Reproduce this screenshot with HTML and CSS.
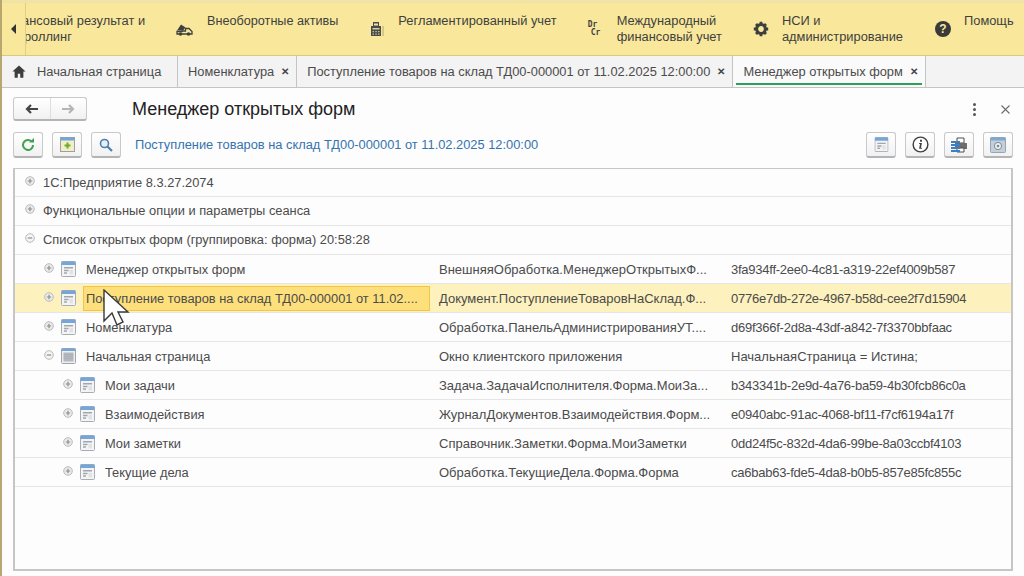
FILE: index.html
```html
<!DOCTYPE HTML>
<html>
	<head>
		<meta http-equiv="Content-Type" content="text/html; charset=UTF-8" />
		<title>Менеджер открытых форм</title>
		<link rel="stylesheet" href="styles.css">
	</head>
	<body>
		<svg class="defs" width="0" height="0">
			<symbol id="form" viewBox="0 0 15 16">
				<rect x="0.5" y="0.5" width="14" height="15" rx="1" fill="#f3f4f5" stroke="#a9adb2"/>
				<rect x="0.5" y="0.5" width="14" height="3.5" fill="#76a5d8"/>
				<path d="M3 6h9v1.5H3zM3 8.8h4.5v1.5H3zM3 11.3h3v1.5H3z" fill="#a3a6aa"/>
				<path d="M8.5 8.8H12v4.5H8.5z" fill="#e0e2e4"/>
			</symbol>
			<symbol id="window" viewBox="0 0 15 16">
				<rect x="0.5" y="0.5" width="14" height="15" rx="1" fill="#eceef0" stroke="#a2a6ab"/>
				<rect x="0.5" y="0.5" width="14" height="2.5" fill="#76a5d8"/>
				<rect x="2.5" y="4.5" width="10" height="9" fill="#b4b9bf"/>
				<path d="M2.5 6.5h10M2.5 8.5h10M2.5 10.5h10" stroke="#a5aab0" stroke-width="0.6"/>
			</symbol>
			<symbol id="plus" viewBox="0 0 10 10">
				<circle cx="5" cy="5" r="4.3" fill="#ececec" stroke="#b9b9b9"/>
				<path d="M2.8 5h4.4M5 2.8v4.4" stroke="#8c8c8c" stroke-width="1.2"/>
			</symbol>
			<symbol id="minus" viewBox="0 0 10 10">
				<circle cx="5" cy="5" r="4.3" fill="#f4f4f4" stroke="#b9b9b9"/>
				<path d="M2.8 5h4.4" stroke="#8c8c8c" stroke-width="1.2"/>
			</symbol>
		</svg>

		<div class="sections">
			<div class="sections_prev"><span class="tri"></span></div>
			<div class="sections_strip">
				<div class="section section--first">
					<span class="section_text">Финансовый результат и<br>контроллинг</span>
				</div>
				<div class="section">
					<svg class="section_icon section_icon--wide" viewBox="0 0 17 14"><path d="M1 8.5L5 2.5l4.5 3L7 8.5z" fill="#3f3f3f"/><path d="M6 9h3.5V6.5H13l3 3V12H1V9.5h5z" fill="none" stroke="#3f3f3f" stroke-width="1.3"/><circle cx="4.5" cy="12" r="1.8" fill="#3f3f3f"/><circle cx="12.5" cy="12" r="1.8" fill="#3f3f3f"/></svg>
					<span class="section_text section_text--narrow">Внеоборотные активы</span>
				</div>
				<div class="section section--calc">
					<svg class="section_icon" viewBox="0 0 16 16"><path d="M2 5h10v10H2z" fill="#4a4a4a"/><path d="M4 1h6v5H4z" fill="#4a4a4a"/><path d="M5 2.5h4v2H5z" fill="#efe3ae"/><path d="M3.5 7h7v1.5h-7z" fill="#d8cfa0"/><path d="M3.5 10h1.5v1.3H3.5zM6.3 10h1.5v1.3H6.3zM9 10h1.5v1.3H9zM3.5 12.5h1.5v1.3H3.5zM6.3 12.5h1.5v1.3H6.3zM9 12.5h1.5v1.3H9z" fill="#c9c09a"/><path d="M13.5 5h1v10h-1z" fill="#b3a772"/></svg>
					<span class="section_text">Регламентированный учет</span>
				</div>
				<div class="section">
					<span class="section_icon drcr"><span>Dr</span><span class="drcr_cr">Cr</span></span>
					<span class="section_text">Международный<br>финансовый учет</span>
				</div>
				<div class="section">
					<svg class="section_icon" viewBox="0 0 16 16"><circle cx="8" cy="8" r="4.4" fill="none" stroke="#3f3f3f" stroke-width="3"/><path d="M6.6 0.8h2.8v2.6H6.6zM6.6 12.6h2.8v2.6H6.6zM0.8 6.6h2.6v2.8H0.8zM12.6 6.6h2.6v2.8h-2.6zM2 4l2-2 2 2-2 2zM10 4l2-2 2 2-2 2zM2 12l2-2 2 2-2 2zM10 12l2-2 2 2-2 2z" fill="#3f3f3f"/></svg>
					<span class="section_text">НСИ и<br>администрирование</span>
				</div>
				<div class="section section--help">
					<span class="section_icon help">?</span>
					<span class="section_text">Помощь</span>
				</div>
			</div>
		</div>

		<div class="tabs">
			<div class="tab tab--home">
				<svg class="home_icon" viewBox="0 0 16 14"><path d="M8 0L0.5 7H3v7h3.6V9.5h2.8V14H13V7h2.5z" fill="#3d3d3d"/></svg>
				<span>Начальная страница</span>
			</div>
			<div class="tab">
				<span>Номенклатура</span>
				<span class="tab_close">✕</span>
			</div>
			<div class="tab">
				<span>Поступление товаров на склад ТД00-000001 от 11.02.2025 12:00:00</span>
				<span class="tab_close">✕</span>
			</div>
			<div class="tab tab--active">
				<span>Менеджер открытых форм</span>
				<span class="tab_close">✕</span>
			</div>
		</div>

		<div class="form">
			<div class="form_head">
				<div class="nav">
					<div class="nav_btn">
						<svg width="14" height="10" viewBox="0 0 14 10"><path d="M13 5H3M6 1L2 5l4 4" fill="none" stroke="#444" stroke-width="2.2"/></svg>
					</div>
					<div class="nav_btn">
						<svg width="14" height="10" viewBox="0 0 14 10"><path d="M1 5h10M8 1l4 4-4 4" fill="none" stroke="#b5b5b5" stroke-width="2.2"/></svg>
					</div>
				</div>
				<h1 class="form_title">Менеджер открытых форм</h1>
				<div class="form_more"><i></i><i></i><i></i></div>
				<svg class="form_close" width="9" height="9" viewBox="0 0 9 9"><path d="M0.5 0.5l8 8M8.5 0.5l-8 8" stroke="#6d6d6d" stroke-width="1.1"/></svg>
			</div>

			<div class="toolbar">
				<div class="btn">
					<svg width="14" height="14" viewBox="0 0 14 14"><path d="M12 7a5 5 0 1 1-1.6-3.7" fill="none" stroke="#3fa34d" stroke-width="2"/><path d="M8 4.5h5V0z" fill="#3fa34d"/></svg>
				</div>
				<div class="btn">
					<svg width="15" height="15" viewBox="0 0 15 15"><rect x="0.5" y="0.5" width="14" height="14" fill="#f3eec6" stroke="#9aa0a6"/><rect x="0.5" y="0.5" width="14" height="3" fill="#76a5d8"/><path d="M7.5 5.5v6M4.5 8.5h6" stroke="#6cab32" stroke-width="2"/></svg>
				</div>
				<div class="btn">
					<svg width="14" height="14" viewBox="0 0 14 14"><circle cx="5.5" cy="5.5" r="4" fill="#e6eff8" stroke="#4c7fae" stroke-width="1.6"/><path d="M8.5 8.5l4.5 4.5" stroke="#4c7fae" stroke-width="2.2"/></svg>
				</div>
				<span class="toolbar_link">Поступление товаров на склад ТД00-000001 от 11.02.2025 12:00:00</span>
				<div class="toolbar_right">
					<div class="btn">
						<svg width="15" height="15" viewBox="0 0 15 16"><use href="#form"/></svg>
					</div>
					<div class="btn">
						<svg width="17" height="17" viewBox="0 0 18 18"><circle cx="9" cy="9" r="7.8" fill="#fff" stroke="#3f3f3f" stroke-width="1.5"/><path d="M8.5 4h2v2h-2zM7.5 7.5h3l-1 5h1v1h-3l1-5h-1z" fill="#3f3f3f"/></svg>
					</div>
					<div class="btn">
						<svg width="18" height="16" viewBox="0 0 18 16"><path d="M7 1h7v5H7z" fill="#fff" stroke="#4d4d4d"/><path d="M5 6h12v6H5z" fill="#6d6d6d"/><path d="M7 11h7v4H7z" fill="#fff" stroke="#4d4d4d"/><path d="M1 4h9v2H1zM1 7h9v2H1zM1 10h9v2H1zM1 13h9v2H1z" fill="#3f7fc0"/></svg>
					</div>
					<div class="btn">
						<svg width="16" height="16" viewBox="0 0 16 16"><rect x="0.5" y="0.5" width="15" height="15" rx="1" fill="#c3cfdb" stroke="#9aa4ae"/><rect x="0.5" y="0.5" width="15" height="3" fill="#7fa8d0"/><circle cx="8" cy="9" r="3.6" fill="#eef1f4" stroke="#7c8791"/><circle cx="8" cy="9" r="1.3" fill="#7c8791"/></svg>
					</div>
				</div>
			</div>

			<div class="tree">
				<div class="row row--first lvl0">
					<div class="cell"><svg class="exp"><use href="#plus"/></svg><span>1С:Предприятие 8.3.27.2074</span></div>
				</div>
				<div class="row lvl0">
					<div class="cell"><svg class="exp"><use href="#plus"/></svg><span>Функциональные опции и параметры сеанса</span></div>
				</div>
				<div class="row lvl0">
					<div class="cell"><svg class="exp"><use href="#minus"/></svg><span>Список открытых форм (группировка: форма) 20:58:28</span></div>
				</div>
				<div class="row lvl1">
					<div class="cell"><svg class="exp"><use href="#plus"/></svg><svg class="ico"><use href="#form"/></svg><span class="name">Менеджер открытых форм</span></div>
					<div class="cell2">ВнешняяОбработка.МенеджерОткрытыхФ...</div>
					<div class="cell3 uuid">3fa934ff-2ee0-4c81-a319-22ef4009b587</div>
				</div>
				<div class="row lvl1 row--current">
					<div class="cell"><svg class="exp"><use href="#plus"/></svg><svg class="ico"><use href="#form"/></svg><span class="name name--selected">Поступление товаров на склад ТД00-000001 от 11.02....</span></div>
					<div class="cell2">Документ.ПоступлениеТоваровНаСклад.Ф...</div>
					<div class="cell3 uuid">0776e7db-272e-4967-b58d-cee2f7d15904</div>
				</div>
				<div class="row lvl1">
					<div class="cell"><svg class="exp"><use href="#plus"/></svg><svg class="ico"><use href="#form"/></svg><span class="name">Номенклатура</span></div>
					<div class="cell2">Обработка.ПанельАдминистрированияУТ....</div>
					<div class="cell3 uuid">d69f366f-2d8a-43df-a842-7f3370bbfaac</div>
				</div>
				<div class="row lvl1">
					<div class="cell"><svg class="exp"><use href="#minus"/></svg><svg class="ico"><use href="#window"/></svg><span class="name">Начальная страница</span></div>
					<div class="cell2">Окно клиентского приложения</div>
					<div class="cell3">НачальнаяСтраница = Истина;</div>
				</div>
				<div class="row lvl2">
					<div class="cell"><svg class="exp"><use href="#plus"/></svg><svg class="ico"><use href="#form"/></svg><span class="name">Мои задачи</span></div>
					<div class="cell2">Задача.ЗадачаИсполнителя.Форма.МоиЗа...</div>
					<div class="cell3 uuid">b343341b-2e9d-4a76-ba59-4b30fcb86c0a</div>
				</div>
				<div class="row lvl2">
					<div class="cell"><svg class="exp"><use href="#plus"/></svg><svg class="ico"><use href="#form"/></svg><span class="name">Взаимодействия</span></div>
					<div class="cell2">ЖурналДокументов.Взаимодействия.Форм...</div>
					<div class="cell3 uuid">e0940abc-91ac-4068-bf11-f7cf6194a17f</div>
				</div>
				<div class="row lvl2">
					<div class="cell"><svg class="exp"><use href="#plus"/></svg><svg class="ico"><use href="#form"/></svg><span class="name">Мои заметки</span></div>
					<div class="cell2">Справочник.Заметки.Форма.МоиЗаметки</div>
					<div class="cell3 uuid">0dd24f5c-832d-4da6-99be-8a03ccbf4103</div>
				</div>
				<div class="row lvl2">
					<div class="cell"><svg class="exp"><use href="#plus"/></svg><svg class="ico"><use href="#form"/></svg><span class="name">Текущие дела</span></div>
					<div class="cell2">Обработка.ТекущиеДела.Форма.Форма</div>
					<div class="cell3 uuid">ca6bab63-fde5-4da8-b0b5-857e85fc855c</div>
				</div>
			</div>
		</div>

		<svg class="cursor" width="28" height="38" viewBox="0 0 28 38"><path d="M2 1v31l8-8 5 12 6-3-5-10h10z" fill="#fff" stroke="#3a3a3a" stroke-width="1.4"/></svg>
	</body>
</html>
```

FILE: styles.css
```css
* {
	box-sizing: border-box;
}
html, body {
	height: 100%;
}
body {
	margin: 0;
	overflow: hidden;
	display: flex;
	flex-direction: column;
	position: relative;
	background: #fdfdfe;
	border-left: 2px solid #b7a76f;
	font-family: "Liberation Sans", Arial, sans-serif;
	font-size: 12.85px;
	color: #4b4b4b;
}
.defs {
	position: absolute;
}

/* section panel */
.sections {
	height: 56px;
	flex: none;
	display: flex;
	background: #f9e89b;
	border-top: 3px solid #efe3a6;
	border-bottom: 1px solid #d9c97e;
}
.sections_prev {
	width: 24px;
	flex: none;
	display: flex;
	align-items: center;
	justify-content: center;
	border-right: 1px solid #e0cf80;
}
.tri {
	border-right: 5px solid #333;
	border-top: 5px solid transparent;
	border-bottom: 5px solid transparent;
}
.sections_strip {
	flex: 1;
	display: flex;
	gap: 31px;
	overflow: hidden;
	white-space: nowrap;
}
.section {
	display: flex;
	gap: 13px;
	flex: none;
	align-items: center;
	height: 100%;
}
.section--first {
	margin-left: -28px;
}
.section--help {
	margin-left: 1px;
}
.section_text {
	align-self: flex-start;
	margin-top: 10px;
	line-height: 16px;
	color: #3f3f3f;
}
.section_text--narrow {
	font-size: 12.65px;
}
.section_icon {
	width: 16px;
	height: 16px;
	flex: none;
}
.section_icon--wide {
	width: 17px;
	margin-right: 1px;
}
.drcr {
	display: flex;
	flex-direction: column;
	font-family: "DejaVu Sans Mono", monospace;
	font-size: 8px;
	font-weight: bold;
	line-height: 8px;
	color: #3f3f3f;
}
.drcr_cr {
	padding-left: 3px;
}
.help {
	border-radius: 50%;
	background: #3a3a3a;
	color: #f9e89b;
	font-size: 12px;
	font-weight: bold;
	line-height: 16px;
	text-align: center;
}

/* open tabs */
.tabs {
	height: 32px;
	flex: none;
	display: flex;
	background: #f3f3f3;
	border-bottom: 1px solid #c4c4c4;
}
.tab {
	display: flex;
	align-items: center;
	gap: 7px;
	padding: 0 7px 0 10px;
	border-right: 1px solid #c4c4c4;
	white-space: nowrap;
}
.tab--home {
	width: 176px;
	padding-left: 10px;
	gap: 11px;
}
.home_icon {
	width: 14px;
	height: 13px;
}
.tab--active {
	background: #fafafa;
	position: relative;
}
.tab--active::after {
	content: "";
	position: absolute;
	left: 3px;
	right: 3px;
	bottom: 2px;
	height: 2px;
	background: #2f9e5b;
}
.tab_close {
	font-size: 10px;
	font-weight: bold;
	color: #444;
}

/* form */
.form {
	flex: 1;
	display: flex;
	flex-direction: column;
	padding: 0 11px 5px 11px;
}
.form_head {
	height: 43px;
	flex: none;
	display: flex;
	align-items: center;
}
.nav {
	display: flex;
	width: 74px;
	height: 24px;
	margin-top: -1px;
	background: linear-gradient(#fff, #f1f1f1);
	border: 1px solid #c9c9c9;
	border-bottom: 2px solid #b4b4b4;
	border-radius: 3px;
}
.nav_btn {
	flex: 1;
	display: flex;
	align-items: center;
	justify-content: center;
}
.nav_btn + .nav_btn {
	border-left: 1px solid #ddd;
}
.form_title {
	margin: 0 0 0 45px;
	flex: 1;
	font-size: 18px;
	font-weight: normal;
	color: #222;
}
.form_more {
	display: flex;
	flex-direction: column;
	gap: 2px;
	margin-right: 25px;
}
.form_more i {
	width: 3px;
	height: 3px;
	background: #555;
	border-radius: 50%;
}
.form_close {
	margin-right: 3px;
}
.toolbar {
	height: 26px;
	flex: none;
	display: flex;
	align-items: center;
	gap: 9px;
	margin-top: 1px;
	margin-bottom: 10px;
}
.btn {
	width: 30px;
	height: 26px;
	flex: none;
	display: flex;
	align-items: center;
	justify-content: center;
	background: linear-gradient(#fff, #f1f1f1);
	border: 1px solid #c9c9c9;
	border-bottom: 2px solid #b4b4b4;
	border-radius: 3px;
}
.toolbar_link {
	margin-left: 5px;
	margin-top: -2px;
	color: #3573ad;
	white-space: nowrap;
}
.toolbar_right {
	margin-left: auto;
	display: flex;
	gap: 9px;
}

/* tree */
.tree {
	flex: 1;
	border: 2px solid #c6c6c6;
	border-top-width: 1px;
}
.row {
	height: 29px;
	display: grid;
	grid-template-columns: 415px 292px 1fr;
	align-items: center;
	border-bottom: 1px solid #e6e6e6;
	white-space: nowrap;
}
.row--first {
	height: 28px;
}
.row--current {
	background: #fdf1bd;
}
.cell {
	display: flex;
	align-items: center;
	height: 100%;
}
.cell2 {
	padding-left: 9px;
	font-size: 13px;
}
.cell3 {
	padding-left: 9px;
	font-size: 13px;
}
.uuid {
	letter-spacing: -0.25px;
}
.exp {
	width: 10px;
	height: 10px;
	flex: none;
	margin-top: -3px;
}
.ico {
	width: 15px;
	height: 16px;
	flex: none;
	margin-left: 7px;
	margin-top: -1px;
}
.lvl0 .cell {
	padding-left: 10px;
	padding-bottom: 1px;
}
.lvl0 .exp {
	margin-right: 8px;
}
.lvl1 .cell {
	padding-left: 29px;
}
.lvl2 .cell {
	padding-left: 48px;
}
.name {
	margin-left: 7px;
	padding-left: 3px;
	display: flex;
	align-items: center;
	flex: 1;
	height: 25px;
}
.name--selected {
	background: #fde07c;
	border: 1px solid #f4c446;
	padding-left: 2px;
}
.cursor {
	position: absolute;
	left: 100px;
	top: 289px;
}
```
